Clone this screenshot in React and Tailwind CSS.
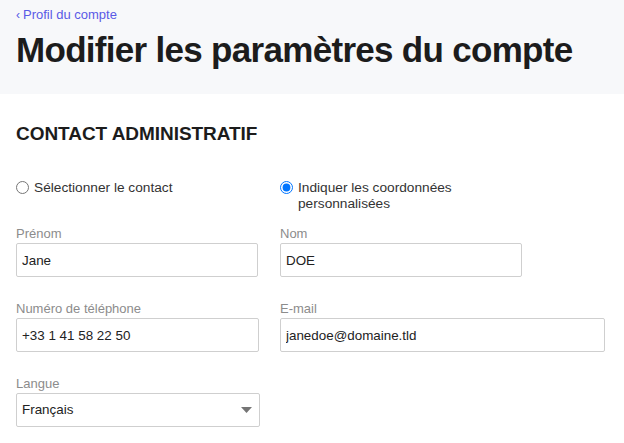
import React, { useState } from "react";

const font = { fontFamily: '"Liberation Sans", Arial, sans-serif' };

function Field({ label, value, width }) {
  return (
    <div className={width}>
      <label className="block h-4 text-[13px] leading-4 text-[#8c8c8c]">{label}</label>
      <input
        defaultValue={value}
        className="mt-[1px] block h-[34px] w-full rounded-[2px] border border-[#cfcfcf] bg-white px-[5px] text-[13.4px] text-[#222] outline-none"
      />
    </div>
  );
}

export default function App() {
  const [mode, setMode] = useState("custom");

  return (
    <div className="min-h-screen bg-white" style={font}>
      <header className="h-[94px] bg-[#f7f8fa] px-4 pt-[7px]">
        <a href="#" className="flex h-4 items-center gap-[3px] text-[13px] leading-4 text-[#5a5ae6]">
          <span className="text-[12px]">‹</span>
          <span>Profil du compte</span>
        </a>
        <h1 className="mt-[7px] text-[35px] font-bold leading-[40px] tracking-[-0.7px] text-[#1c1c1c]">
          Modifier les paramètres du compte
        </h1>
      </header>

      <main className="px-4 pt-[28px]">
        <h2 className="text-[19px] font-bold leading-6 tracking-[-0.05px] text-[#1c1c1c]">
          CONTACT ADMINISTRATIF
        </h2>

        <div className="mt-[34px] grid grid-cols-[264px_1fr]">
          <label className="flex items-start gap-[5px] text-[13.7px] leading-4 text-[#333]">
            <input
              type="radio"
              name="contact"
              checked={mode === "select"}
              onChange={() => setMode("select")}
              className="m-0 mt-[1px] h-[13px] w-[13px]"
            />
            <span>Sélectionner le contact</span>
          </label>
          <label className="flex items-start gap-[5px] text-[13.7px] leading-4 text-[#333]">
            <input
              type="radio"
              name="contact"
              checked={mode === "custom"}
              onChange={() => setMode("custom")}
              className="m-0 mt-[1px] h-[13px] w-[13px]"
            />
            <span className="w-[170px]">Indiquer les coordonnées personnalisées</span>
          </label>
        </div>

        <div className="mt-[14px] grid grid-cols-[264px_1fr] gap-y-[24px]">
          <Field label="Prénom" value="Jane" width="w-[242px]" />
          <Field label="Nom" value="DOE" width="w-[242px]" />
          <Field label="Numéro de téléphone" value="+33 1 41 58 22 50" width="w-[243px]" />
          <Field label="E-mail" value="janedoe@domaine.tld" width="w-[325px]" />
          <div className="w-[244px]">
            <label className="block h-4 text-[13px] leading-4 text-[#8c8c8c]">Langue</label>
            <div className="mt-[1px] flex h-[34px] items-center justify-between rounded-[2px] border border-[#cfcfcf] bg-white pl-[5px] pr-[7px] text-[13.4px] text-[#222]">
              <span>Français</span>
              <svg width="11" height="6" viewBox="0 0 11 6">
                <path d="M0 0h11L5.5 6z" fill="#757575" />
              </svg>
            </div>
          </div>
        </div>
      </main>
    </div>
  );
}
